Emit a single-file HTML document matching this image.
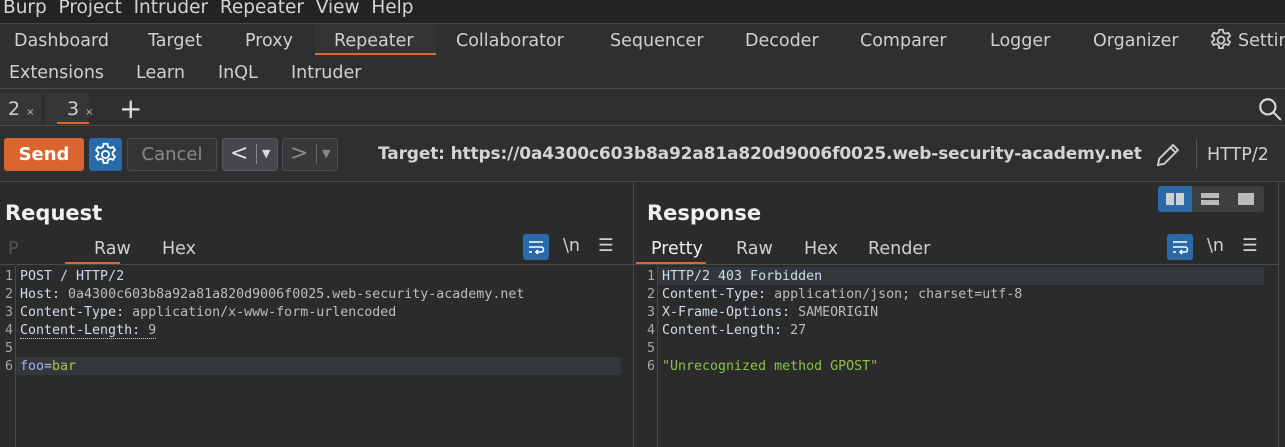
<!DOCTYPE html>
<html><head><style>
*{margin:0;padding:0;box-sizing:border-box}
body{width:1285px;height:447px;background:#2b2b2b;font-family:"DejaVu Sans","Liberation Sans",sans-serif;color:#d0d0d0;position:relative;overflow:hidden}
.a{position:absolute;white-space:nowrap}
.m{font-size:18.5px;color:#d4d4d4}
.t{font-size:17.5px;color:#d0d0d0}
.code{font-family:"DejaVu Sans Mono","Liberation Mono",monospace;font-size:13.3px;line-height:18px}
.k{color:#cfdcea}.v{color:#bdbdbd}.ln{color:#a8a8a8}
</style></head><body>
<div class="a" style="left:0;top:0;width:1285px;height:23px;background:#222324"></div>
<div class="a" style="left:0;top:23px;width:1285px;height:1px;background:#464646"></div>
<div class="a m" style="left:3px;top:-3px">Burp&nbsp; Project&nbsp; Intruder&nbsp; Repeater&nbsp; View&nbsp; Help</div>
<div class="a" style="left:0;top:24px;width:1285px;height:64px;background:#2e2f31"></div>
<div class="a" style="left:0;top:88px;width:1285px;height:1px;background:#4a4a4a"></div>
<div class="a t" style="left:14px;top:31px">Dashboard</div>
<div class="a t" style="left:148px;top:31px">Target</div>
<div class="a t" style="left:245px;top:31px">Proxy</div>
<div class="a" style="left:315px;top:24px;width:121px;height:32px;background:#333436"></div>
<div class="a t" style="left:334px;top:31px">Repeater</div>
<div class="a" style="left:315px;top:53px;width:121px;height:2px;background:#e0682e"></div>
<div class="a t" style="left:456px;top:31px">Collaborator</div>
<div class="a t" style="left:610px;top:31px">Sequencer</div>
<div class="a t" style="left:745px;top:31px">Decoder</div>
<div class="a t" style="left:860px;top:31px">Comparer</div>
<div class="a t" style="left:990px;top:31px">Logger</div>
<div class="a t" style="left:1093px;top:31px">Organizer</div>
<svg class="a" style="left:1208px;top:27px" width="26" height="26" viewBox="0 0 24 24" fill="none" stroke="#d0d0d0" stroke-width="1.6"><circle cx="12" cy="12" r="3.2"/><path d="M10.3 2.5h3.4l.5 2.6 2 1.1 2.5-.9 1.7 2.9-2 1.7v2.2l2 1.7-1.7 2.9-2.5-.9-2 1.1-.5 2.6h-3.4l-.5-2.6-2-1.1-2.5.9-1.7-2.9 2-1.7v-2.2l-2-1.7 1.7-2.9 2.5.9 2-1.1z"/></svg>
<div class="a t" style="left:1238px;top:31px">Settings</div>
<div class="a t" style="left:9px;top:63px">Extensions</div>
<div class="a t" style="left:136px;top:63px">Learn</div>
<div class="a t" style="left:218px;top:63px">InQL</div>
<div class="a t" style="left:291px;top:63px">Intruder</div>
<div class="a" style="left:0;top:89px;width:1285px;height:36px;background:#2e2f31"></div>
<div class="a" style="left:0;top:125px;width:1285px;height:1px;background:#4a4a4a"></div>
<div class="a" style="left:-4px;top:93px;width:45px;height:31px;background:#353638;border-radius:4px"></div>
<div class="a" style="left:45px;top:93px;width:44px;height:31px;background:#353638;border-radius:4px"></div>
<div class="a t" style="left:8px;top:98px;font-size:19px">2 <span style="font-size:10px;color:#bbb">×</span></div>
<div class="a t" style="left:67px;top:98px;font-size:19px">3 <span style="font-size:10px;color:#bbb">×</span></div>
<div class="a" style="left:57px;top:122px;width:32px;height:2px;background:#e0682e"></div>
<div class="a" style="left:119px;top:95px;font-size:28px;line-height:28px;color:#ddd">+</div>
<svg class="a" style="left:1257px;top:96px" width="26" height="26" viewBox="0 0 24 24" fill="none" stroke="#d8d8d8" stroke-width="2"><circle cx="10" cy="10" r="7"/><path d="M15 15l7 7"/></svg>
<div class="a" style="left:0;top:126px;width:1285px;height:55px;background:#2e2f31"></div>
<div class="a" style="left:0;top:181px;width:1285px;height:1px;background:#4a4a4a"></div>
<div class="a" style="left:4px;top:138px;width:80px;height:33px;background:#db6530;border-radius:3px;color:#fff;font-weight:bold;font-size:18px;text-align:center;line-height:33px">Send</div>
<div class="a" style="left:89px;top:138px;width:33px;height:33px;background:#2b6aa8;border-radius:3px"></div>
<svg class="a" style="left:92px;top:141px" width="27" height="27" viewBox="0 0 24 24" fill="none" stroke="#fff" stroke-width="1.6"><circle cx="12" cy="12" r="3.2"/><path d="M10.3 2.5h3.4l.5 2.6 2 1.1 2.5-.9 1.7 2.9-2 1.7v2.2l2 1.7-1.7 2.9-2.5-.9-2 1.1-.5 2.6h-3.4l-.5-2.6-2-1.1-2.5.9-1.7-2.9 2-1.7v-2.2l-2-1.7 1.7-2.9 2.5.9 2-1.1z"/></svg>
<div class="a" style="left:127px;top:138px;width:90px;height:33px;border:1px solid #4a4b4d;border-radius:3px;background:#333436;color:#8a8a8a;font-size:18px;text-align:center;line-height:31px">Cancel</div>
<div class="a" style="left:222px;top:138px;width:56px;height:33px;border:1px solid #57595b;border-radius:3px;background:#45474a"></div>
<div class="a" style="left:230px;top:141px;font-size:22px;color:#e0e0e0">&lt;</div>
<div class="a" style="left:256px;top:144px;width:1px;height:20px;background:#888"></div>
<div class="a" style="left:262px;top:147px;font-size:11px;color:#ddd">▼</div>
<div class="a" style="left:282px;top:138px;width:56px;height:33px;border:1px solid #4a4b4d;border-radius:3px;background:#38393b"></div>
<div class="a" style="left:290px;top:141px;font-size:22px;color:#8a8a8a">&gt;</div>
<div class="a" style="left:316px;top:144px;width:1px;height:20px;background:#666"></div>
<div class="a" style="left:322px;top:147px;font-size:11px;color:#888">▼</div>
<div class="a" style="left:378px;top:144px;font-size:17px;font-weight:bold;color:#d4d4d4;letter-spacing:-0.15px">Target: https://0a4300c603b8a92a81a820d9006f0025.web-security-academy.net</div>
<svg class="a" style="left:1153px;top:140px" width="30" height="30" viewBox="0 0 24 24" fill="none" stroke="#d0d0d0" stroke-width="1.5"><path d="M4 20l1-5L16 4l4 4L9 19z M14 6l4 4 M4 20l5-1"/></svg>
<div class="a" style="left:1196px;top:139px;width:1px;height:30px;background:#555"></div>
<div class="a t" style="left:1207px;top:145px">HTTP/2</div>
<div class="a" style="left:633px;top:182px;width:1px;height:265px;background:#4a4a4a"></div>
<div class="a" style="left:1278px;top:182px;width:1px;height:265px;background:#4a4a4a"></div>
<div class="a" style="left:5px;top:201px;font-size:21px;font-weight:bold;color:#f0f0f0">Request</div>
<div class="a" style="left:647px;top:201px;font-size:21px;font-weight:bold;color:#f0f0f0">Response</div>
<div class="a" style="left:1158px;top:186px;width:106px;height:26px;background:#3e3f41;border-radius:3px"></div>
<div class="a" style="left:1158px;top:186px;width:34px;height:26px;background:#2b6aa8;border-radius:3px 0 0 3px"></div>
<div class="a" style="left:1166px;top:193px;width:8px;height:12px;background:#d0d0d0"></div><div class="a" style="left:1176px;top:193px;width:8px;height:12px;background:#d0d0d0"></div>
<div class="a" style="left:1201px;top:193px;width:18px;height:5px;background:#bbb"></div><div class="a" style="left:1201px;top:200px;width:18px;height:5px;background:#bbb"></div>
<div class="a" style="left:1238px;top:193px;width:16px;height:12px;background:#bbb"></div>
<div class="a t" style="left:8px;top:239px;color:#555">P</div>
<div class="a t" style="left:94px;top:239px">Raw</div>
<div class="a t" style="left:162px;top:239px">Hex</div>
<div class="a" style="left:65px;top:262px;width:55px;height:3px;background:#e0682e"></div>
<div class="a" style="left:0;top:264px;width:633px;height:1px;background:#4a4a4a"></div>
<div class="a" style="left:523px;top:234px;width:26px;height:26px;background:#2b6aa8;border-radius:3px"></div>
<svg class="a" style="left:526px;top:237px" width="20" height="20" viewBox="0 0 20 20" fill="none" stroke="#fff" stroke-width="1.6"><path d="M3 5h14M3 10h12a2.5 2.5 0 010 5H10M12 13l-2 2 2 2M3 15h3"/></svg>
<div class="a t" style="left:563px;top:236px">\n</div>
<div class="a t" style="left:598px;top:236px">☰</div>
<div class="a t" style="left:651px;top:239px;color:#f0f0f0">Pretty</div>
<div class="a t" style="left:736px;top:239px">Raw</div>
<div class="a t" style="left:804px;top:239px">Hex</div>
<div class="a t" style="left:868px;top:239px">Render</div>
<div class="a" style="left:636px;top:262px;width:70px;height:3px;background:#e0682e"></div>
<div class="a" style="left:634px;top:264px;width:644px;height:1px;background:#4a4a4a"></div>
<div class="a" style="left:1167px;top:234px;width:26px;height:26px;background:#2b6aa8;border-radius:3px"></div>
<svg class="a" style="left:1170px;top:237px" width="20" height="20" viewBox="0 0 20 20" fill="none" stroke="#fff" stroke-width="1.6"><path d="M3 5h14M3 10h12a2.5 2.5 0 010 5H10M12 13l-2 2 2 2M3 15h3"/></svg>
<div class="a t" style="left:1207px;top:236px">\n</div>
<div class="a t" style="left:1242px;top:236px">☰</div>
<div class="a" style="left:15px;top:266px;width:1px;height:181px;background:#4a4a4a"></div>
<div class="a" style="left:16px;top:357px;width:605px;height:18px;background:#33373b"></div>
<div class="a code ln" style="left:5px;top:268px">1<br>2<br>3<br>4<br>5<br>6</div>
<div class="a code" style="left:20px;top:268px">
<span class="k">POST / HTTP/2</span><br>
<span class="k">Host:</span><span class="v"> 0a4300c603b8a92a81a820d9006f0025.web-security-academy.net</span><br>
<span class="k">Content-Type:</span><span class="v"> application/x-www-form-urlencoded</span><br>
<span style="border-bottom:1px dotted #ccc"><span class="k">Content-Length:</span><span class="v"> 9</span></span><br>
<br>
<span style="color:#9fb4f2">foo</span><span class="v">=</span><span style="color:#a8c44e">bar</span></div>
<div class="a" style="left:657px;top:266px;width:1px;height:181px;background:#4a4a4a"></div>
<div class="a" style="left:658px;top:267px;width:606px;height:18px;background:#33373b"></div>
<div class="a code ln" style="left:647px;top:268px">1<br>2<br>3<br>4<br>5<br>6</div>
<div class="a code" style="left:662px;top:268px">
<span class="k">HTTP/2 403 Forbidden</span><br>
<span class="k">Content-Type:</span><span class="v"> application/json; charset=utf-8</span><br>
<span class="k">X-Frame-Options:</span><span class="v"> SAMEORIGIN</span><br>
<span class="k">Content-Length:</span><span class="v"> 27</span><br>
<br>
<span style="color:#8fbf4f">"Unrecognized method GPOST"</span></div>
</body></html>
